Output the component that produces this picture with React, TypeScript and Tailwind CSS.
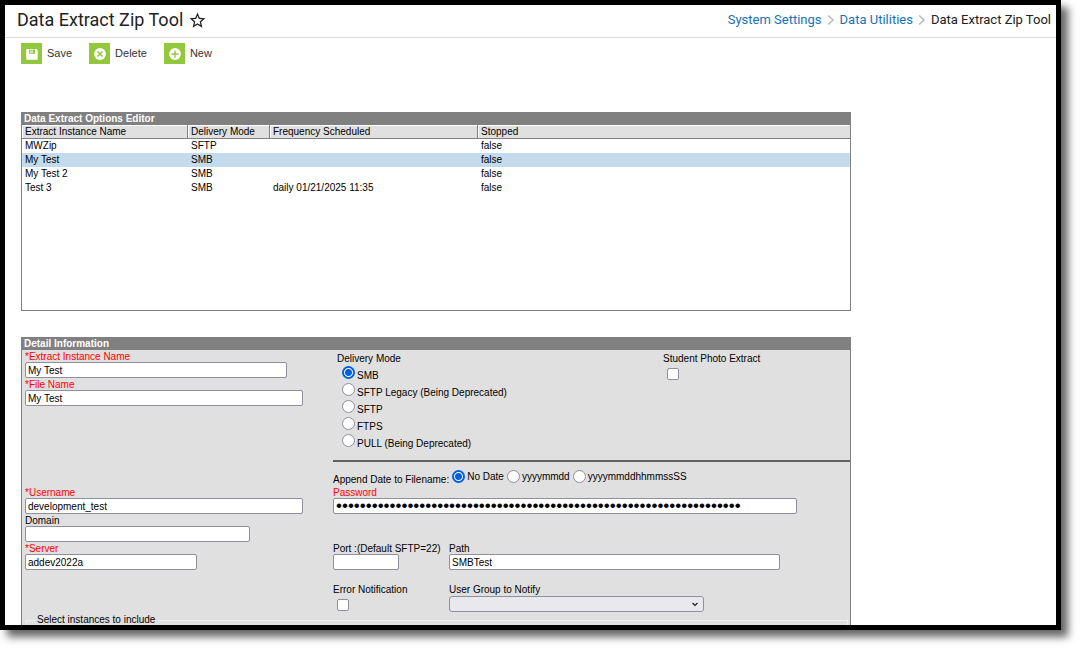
import { useState } from "react";
import type { InputHTMLAttributes, ReactNode } from "react";
import { MdStarBorder } from "react-icons/md";

type Extract = { name: string; mode: string; frequency: string; stopped: string };

const extracts: Extract[] = [
  { name: "MWZip", mode: "SFTP", frequency: "", stopped: "false" },
  { name: "My Test", mode: "SMB", frequency: "", stopped: "false" },
  { name: "My Test 2", mode: "SMB", frequency: "", stopped: "false" },
  { name: "Test 3", mode: "SMB", frequency: "daily 01/21/2025 11:35", stopped: "false" },
];

const deliveryModes = ["SMB", "SFTP Legacy (Being Deprecated)", "SFTP", "FTPS", "PULL (Being Deprecated)"];
const dateFormats = ["No Date", "yyyymmdd", "yyyymmddhhmmssSS"];

function SaveIcon() {
  return (
    <svg viewBox="0 0 21 21" className="size-[21px]" aria-hidden="true">
      <path d="M5.9 6h9.6l1.2 1.2V16a.7.7 0 0 1-.7.7H5.9a.7.7 0 0 1-.7-.7V6.7a.7.7 0 0 1 .7-.7z" fill="#fff" />
      <path d="M8 6.5h6v4.2H8z" fill="#93c83d" />
      <path d="M8.8 6.5h2.8v3.4H8.8z" fill="#fff" />
      <path d="M9.4 7h1.2v2.4H9.4z" fill="#93c83d" />
    </svg>
  );
}

function DeleteIcon() {
  return (
    <svg viewBox="0 0 21 21" className="size-[21px]" aria-hidden="true">
      <circle cx="11" cy="11" r="5.9" fill="#fff" />
      <path d="M8.5 8.5l5 5M13.5 8.5l-5 5" stroke="#93c83d" strokeWidth="1.5" />
    </svg>
  );
}

function NewIcon() {
  return (
    <svg viewBox="0 0 21 21" className="size-[21px]" aria-hidden="true">
      <circle cx="11" cy="11" r="5.9" fill="#fff" />
      <path d="M11 7.5v7M7.5 11h7" stroke="#93c83d" strokeWidth="1.4" />
    </svg>
  );
}

function ToolButton({ icon, label }: { icon: ReactNode; label: string }) {
  return (
    <button type="button" className="flex items-center gap-[5px] text-[11px] leading-[21px] text-[#333]">
      <span className="bg-[#93c83d]">{icon}</span>
      {label}
    </button>
  );
}

function Crumb() {
  return (
    <svg viewBox="0 0 8 12" className="h-3 w-2" fill="none" stroke="#bbb" strokeWidth="1.6" aria-hidden="true">
      <path d="M1.2 1.5L6 6l-4.8 4.5" />
    </svg>
  );
}

const boxClass =
  "block h-4 rounded-[2px] border border-[#8f8f9d] bg-white px-[2px] leading-[14px] text-black outline-none";

type FieldProps = InputHTMLAttributes<HTMLInputElement> & {
  id: string;
  label: string;
  width: string;
  required?: boolean;
};

function Field({ id, label, width, required, ...rest }: FieldProps) {
  return (
    <div>
      <label htmlFor={id} className={`block h-3 leading-[13px] whitespace-nowrap ${required ? "text-[#f00]" : ""}`}>
        {required ? "*" : ""}
        {label}
      </label>
      <input id={id} className={`${boxClass} text-[10px] ${width}`} {...rest} />
    </div>
  );
}

const radioClass =
  "size-[13px] shrink-0 appearance-none rounded-full border border-[#8f8f9d] bg-white checked:border-2 checked:border-[#0060df] checked:bg-[radial-gradient(circle,#0060df_3px,#fff_4px)]";
const checkClass =
  "block size-3 appearance-none rounded-[2px] border border-[#8f8f9d] bg-white checked:bg-[#0060df]";

export default function App() {
  const [selected, setSelected] = useState("My Test");
  const [mode, setMode] = useState("SMB");
  const [format, setFormat] = useState("No Date");

  return (
    <div className="h-screen overflow-hidden bg-white pr-[25px] pb-[25px] font-['Liberation_Sans',Arial,sans-serif]">
      <div className="h-full overflow-hidden border-[5px] border-black bg-white shadow-[7px_7px_8px_rgba(0,0,0,0.6)]">
        <header className="flex h-[33px] items-center justify-between border-b border-[#ddd] pr-[5px] pb-[2px] pl-3 font-[Roboto,sans-serif] text-[#222]">
          <div className="flex items-center gap-[5px]">
            <h1 className="text-[18px] leading-6">Data Extract Zip Tool</h1>
            <button type="button" aria-label="Add to favorites">
              <MdStarBorder className="size-[19px]" />
            </button>
          </div>
          <nav aria-label="Breadcrumb" className="flex items-center gap-[5px] text-[13px]">
            <a href="#system" className="text-[#1672b8]">System Settings</a>
            <Crumb />
            <a href="#utilities" className="text-[#1672b8]">Data Utilities</a>
            <Crumb />
            <span>Data Extract Zip Tool</span>
          </nav>
        </header>

        <div className="flex gap-[17px] pt-[5px] pl-4">
          <ToolButton icon={<SaveIcon />} label="Save" />
          <ToolButton icon={<DeleteIcon />} label="Delete" />
          <ToolButton icon={<NewIcon />} label="New" />
        </div>

        <main className="flex flex-col gap-[26px] pt-12 pl-4 text-[10px] leading-3 text-black">
          <section className="h-[199px] w-[830px] border border-t-0 border-[#808080]">
            <h2 className="bg-[#808080] px-[2px] leading-[13px] font-bold text-white">Data Extract Options Editor</h2>
            <table className="w-full table-fixed border-separate border-spacing-0 text-left">
              <colgroup>
                <col className="w-[166px]" />
                <col className="w-[82px]" />
                <col className="w-[208px]" />
                <col />
              </colgroup>
              <thead>
                <tr className="h-[14px] bg-[#e0e0e0]">
                  {["Extract Instance Name", "Delivery Mode", "Frequency Scheduled", "Stopped"].map((h) => (
                    <th
                      key={h}
                      className="border-r border-b border-[#808080] p-0 pl-[3px] leading-[13px] font-normal shadow-[inset_1px_1px_0_#fff] last:border-r-0"
                    >
                      {h}
                    </th>
                  ))}
                </tr>
              </thead>
              <tbody>
                {extracts.map((e) => (
                  <tr
                    key={e.name}
                    onClick={() => setSelected(e.name)}
                    className={`h-[14px] cursor-pointer leading-[14px] ${selected === e.name ? "bg-[#c4daed]" : ""}`}
                  >
                    <td className="p-0 pl-[3px]">{e.name}</td>
                    <td className="p-0 pl-[3px]">{e.mode}</td>
                    <td className="p-0 pl-[3px]">{e.frequency}</td>
                    <td className="p-0 pl-[3px]">{e.stopped}</td>
                  </tr>
                ))}
              </tbody>
            </table>
          </section>

          <section className="w-[830px] border border-t-0 border-[#808080] bg-[#e0e0e0]">
            <h2 className="bg-[#808080] px-[2px] leading-[13px] font-bold text-white">Detail Information</h2>
            <form className="pl-[3px]">
              <div className="grid grid-cols-[308px_1fr]">
                <div>
                  <Field id="instance" label="Extract Instance Name" width="w-[262px]" required defaultValue="My Test" />
                  <Field id="file" label="File Name" width="w-[278px]" required defaultValue="My Test" />
                </div>
                <div>
                  <div className="grid grid-cols-[326px_1fr] border-b-2 border-[#606060] pt-[3px] pb-[9px] pl-1">
                    <fieldset>
                      <legend>Delivery Mode</legend>
                      <div className="pt-px pl-[5px]">
                        {deliveryModes.map((m) => (
                          <label key={m} className="flex h-[17px] items-start gap-[2px]">
                            <input
                              type="radio"
                              name="mode"
                              className={radioClass}
                              checked={mode === m}
                              onChange={() => setMode(m)}
                            />
                            <span className="pt-1">{m}</span>
                          </label>
                        ))}
                      </div>
                    </fieldset>
                    <div>
                      <label htmlFor="photo" className="block">Student Photo Extract</label>
                      <div className="pt-[3px] pl-1">
                        <input id="photo" type="checkbox" className={checkClass} />
                      </div>
                    </div>
                  </div>
                  <div className="flex h-6 items-end gap-[3px]" role="radiogroup" aria-labelledby="append">
                    <span id="append">Append Date to Filename:</span>
                    <div className="flex gap-[3px] pb-[3px]">
                      {dateFormats.map((f) => (
                        <label key={f} className="flex items-center gap-[2px]">
                          <input
                            type="radio"
                            name="format"
                            className={radioClass}
                            checked={format === f}
                            onChange={() => setFormat(f)}
                          />
                          <span className="pt-[2px]">{f}</span>
                        </label>
                      ))}
                    </div>
                  </div>
                </div>
              </div>

              <div className="grid grid-cols-[308px_1fr]">
                <div>
                  <Field id="user" label="Username" width="w-[278px]" required defaultValue="development_test" />
                  <Field id="domain" label="Domain" width="w-[225px]" />
                  <Field id="server" label="Server" width="w-[172px]" required defaultValue="addev2022a" />
                </div>
                <div className="flex flex-col gap-7">
                  <div>
                    <label htmlFor="password" className="block h-3 leading-[13px] text-[#f00]">Password</label>
                    <input
                      id="password"
                      type="password"
                      className={`${boxClass} w-[464px] text-[17px]`}
                      defaultValue={"x".repeat(68)}
                    />
                  </div>
                  <div className="grid grid-cols-[116px_1fr] gap-y-[14px]">
                    <Field id="port" label="Port :(Default SFTP=22)" width="w-[66px]" />
                    <Field id="path" label="Path" width="w-[331px]" defaultValue="SMBTest" />
                    <div>
                      <label htmlFor="error" className="block">Error Notification</label>
                      <div className="pt-[3px] pl-1">
                        <input id="error" type="checkbox" className={checkClass} />
                      </div>
                    </div>
                    <div>
                      <label htmlFor="group" className="block">User Group to Notify</label>
                      <div className="relative w-[255px]">
                        <select
                          id="group"
                          className="block h-4 w-full appearance-none rounded-[3px] border border-[#8f8f9d] bg-[#e9e9ed] px-1 text-[10px] leading-[14px]"
                        >
                          <option></option>
                        </select>
                        <svg
                          viewBox="0 0 8 8"
                          className="pointer-events-none absolute top-1 right-[5px] size-2"
                          fill="none"
                          stroke="#222"
                          strokeWidth="1.3"
                          aria-hidden="true"
                        >
                          <path d="M1.5 3L4 5.4 6.5 3" />
                        </svg>
                      </div>
                    </div>
                  </div>
                </div>
              </div>

              <fieldset className="mt-[2px] mr-[2px] ml-px h-20 border border-[#efefef] pl-2">
                <legend className="px-[2px]">Select instances to include</legend>
              </fieldset>
            </form>
          </section>
        </main>
      </div>
    </div>
  );
}
